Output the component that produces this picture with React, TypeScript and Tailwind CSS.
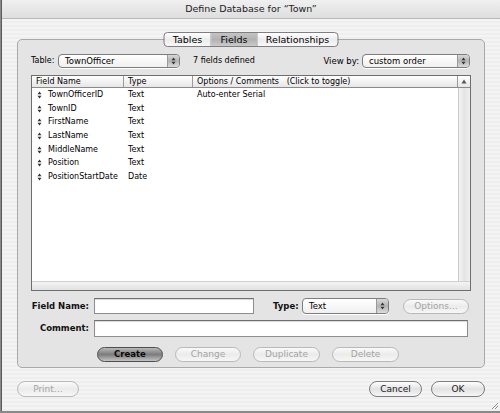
import React from "react";

const fieldRows = [
  { name: "TownOfficerID", type: "Text", options: "Auto-enter Serial" },
  { name: "TownID", type: "Text", options: "" },
  { name: "FirstName", type: "Text", options: "" },
  { name: "LastName", type: "Text", options: "" },
  { name: "MiddleName", type: "Text", options: "" },
  { name: "Position", type: "Text", options: "" },
  { name: "PositionStartDate", type: "Date", options: "" },
];

function UpDown() {
  return (
    <svg width="5" height="8" viewBox="0 0 5 8" className="shrink-0">
      <path d="M2.5 0.5 L4.5 3.2 L0.5 3.2 Z M2.5 7.5 L4.5 4.8 L0.5 4.8 Z" fill="#333" />
    </svg>
  );
}

function PopUp({ value, className }: { value: string; className: string }) {
  return (
    <div
      className={`flex items-stretch rounded-[4px] border border-[#7d7d7d] bg-gradient-to-b from-white to-[#f0f0f0] shadow-[0_1px_0_#fff] ${className}`}
    >
      <span className="flex-1 pl-[6px] flex items-center text-[8.5px] text-black leading-none">{value}</span>
      <span className="w-[12px] flex items-center justify-center border-l border-[#9a9a9a] rounded-r-[3px] bg-gradient-to-b from-[#d8d8d8] via-[#b4b4b4] to-[#dcdcdc]">
        <UpDown />
      </span>
    </div>
  );
}

type BtnKind = "default" | "normal" | "disabled";

function AquaButton({ label, kind, className }: { label: string; kind: BtnKind; className: string }) {
  const styles: Record<BtnKind, string> = {
    default:
      "border-[#4e4e4e] bg-gradient-to-b from-[#b8b8b8] via-[#7c7c7c] to-[#c4c4c4] text-black",
    normal:
      "border-[#7e7e7e] bg-gradient-to-b from-white via-[#e2e2e2] to-[#f6f6f6] text-[#1a1a1a]",
    disabled:
      "border-[#b9b9b9] bg-gradient-to-b from-[#fafafa] via-[#ebebeb] to-[#f7f7f7] text-[#a4a4a4]",
  };
  return (
    <div
      className={`flex items-center justify-center rounded-full border text-[9px] leading-none ${styles[kind]} ${className}`}
    >
      <span className={kind === "default" ? "text-[#0a0a0a] font-bold text-[8.5px]" : ""}>{label}</span>
    </div>
  );
}

function TextField({ className }: { className: string }) {
  return (
    <div className={`bg-white border border-[#8e8e8e] border-t-[#6f6f6f] shadow-[inset_0_1px_1px_rgba(0,0,0,0.15)] ${className}`} />
  );
}

export default function App() {
  return (
    <div className="w-[500px] h-[413px] overflow-hidden font-['DejaVu_Sans','Liberation_Sans',sans-serif] bg-[#8a8a8a]">
      <div className="w-[499px] h-[411px] ml-[1px] flex flex-col border-l border-[#5c5c5c] bg-[repeating-linear-gradient(0deg,#eeeeee_0px,#eeeeee_2px,#f4f4f4_2px,#f4f4f4_4px)]">
        {/* title bar */}
        <div className="h-[19px] shrink-0 flex items-center justify-center border-b border-[#b8b8b8] bg-gradient-to-b from-[#f0f0f0] to-[#dedede]">
          <span className="text-[9.5px] text-[#222] leading-none">Define Database for “Town”</span>
        </div>

        {/* group box */}
        <div className="relative mt-[20px] ml-[15px] w-[468px] h-[329px] rounded-[5px] border border-[#a9a9a9] bg-[#e4e4e4] px-[13px] pt-[14px] flex flex-col">
          {/* segmented tabs over the border */}
          <div className="absolute left-1/2 -translate-x-1/2 top-[-8px] h-[15px] flex rounded-[4px] border border-[#7f7f7f] overflow-hidden text-[9.5px] leading-none text-black bg-gradient-to-b from-white via-[#ececec] to-[#f8f8f8]">
            <div className="w-[47px] flex items-center justify-center border-r border-[#a0a0a0]">Tables</div>
            <div className="w-[46px] flex items-center justify-center border-r border-[#a0a0a0] bg-gradient-to-b from-[#c4c4c4] via-[#b2b2b2] to-[#cacaca]">Fields</div>
            <div className="w-[80px] flex items-center justify-center">Relationships</div>
          </div>

          {/* table / view by row */}
          <div className="h-[14px] flex items-center text-[8px] text-black leading-none">
            <span className="w-[27px]">Table:</span>
            <PopUp value="TownOfficer" className="w-[122px] h-[14px]" />
            <span className="ml-[13px]">7 fields defined</span>
            <span className="ml-auto mr-[3px] text-[8.5px]">View by:</span>
            <PopUp value="custom order" className="w-[108px] h-[14px] mr-[1px]" />
          </div>

          {/* field list */}
          <div className="mt-[7px] h-[216px] w-[440px] border border-[#6e6e6e] bg-white flex flex-col text-[8px] leading-none text-black">
            <div className="h-[12px] shrink-0 flex border-b border-[#8a8a8a] bg-gradient-to-b from-white to-[#e6e6e6]">
              <div className="w-[92px] flex items-center pl-[4px] border-r border-[#9a9a9a]">Field Name</div>
              <div className="w-[69px] flex items-center pl-[4px] border-r border-[#9a9a9a]">Type</div>
              <div className="flex-1 flex items-center pl-[4px] border-r border-[#9a9a9a]">
                Options / Comments&nbsp;&nbsp;&nbsp;(Click to toggle)
              </div>
              <div className="w-[12px] flex items-center justify-center">
                <svg width="6" height="5" viewBox="0 0 6 5">
                  <path d="M3 0.5 L5.5 4.5 L0.5 4.5 Z" fill="#555" />
                </svg>
              </div>
            </div>
            <div className="flex-1 flex min-h-0">
              <div className="flex-1 flex flex-col">
                {fieldRows.map((r) => (
                  <div key={r.name} className="h-[13.7px] flex items-center">
                    <div className="w-[92px] flex items-center gap-[6px] pl-[5px]">
                      <UpDown />
                      <span>{r.name}</span>
                    </div>
                    <div className="w-[69px] pl-[4px]">{r.type}</div>
                    <div className="flex-1 pl-[4px]">{r.options}</div>
                  </div>
                ))}
              </div>
              <div className="w-[12px] border-l border-[#c8c8c8] bg-gradient-to-r from-[#f4f4f4] via-[#e4e4e4] to-[#f0f0f0]" />
            </div>
            <div className="h-[9px] shrink-0 border-t border-[#d0d0d0] bg-gradient-to-b from-[#f4f4f4] to-[#e2e2e2]" />
          </div>

          {/* field name row */}
          <div className="mt-[7px] h-[16px] flex items-center">
            <span className="w-[63px] pr-[5px] text-right text-[8.5px] font-bold text-[#111] leading-none">Field Name:</span>
            <TextField className="w-[160px] h-[16px]" />
            <span className="ml-[19px] w-[29px] text-[8.5px] font-bold text-[#111] leading-none">Type:</span>
            <PopUp value="Text" className="w-[87px] h-[16px]" />
            <AquaButton label="Options…" kind="disabled" className="ml-[14px] w-[66px] h-[15px]" />
          </div>

          {/* comment row */}
          <div className="mt-[6px] h-[17px] flex items-center">
            <span className="w-[63px] pr-[5px] text-right text-[8.5px] font-bold text-[#111] leading-none">Comment:</span>
            <TextField className="w-[374px] h-[17px]" />
          </div>

          {/* action buttons */}
          <div className="mt-[10px] h-[15px] flex items-center gap-[12px] pl-[66px]">
            <AquaButton label="Create" kind="default" className="w-[66px] h-[15px]" />
            <AquaButton label="Change" kind="disabled" className="w-[66px] h-[15px]" />
            <AquaButton label="Duplicate" kind="disabled" className="w-[67px] h-[15px]" />
            <AquaButton label="Delete" kind="disabled" className="w-[67px] h-[15px]" />
          </div>
        </div>

        {/* bottom buttons */}
        <div className="mt-[13px] h-[16px] flex items-center px-[15px]">
          <AquaButton label="Print…" kind="disabled" className="w-[62px] h-[16px]" />
          <AquaButton label="Cancel" kind="normal" className="ml-auto w-[53px] h-[16px]" />
          <AquaButton label="OK" kind="normal" className="ml-[9px] w-[54px] h-[16px]" />
        </div>

        {/* resize grip */}
        <div className="mt-auto flex justify-end pr-[1px] pb-[1px]">
          <svg width="9" height="9" viewBox="0 0 9 9">
            <path d="M8 2 L2 8 M8 5 L5 8" stroke="#8c8c8c" strokeWidth="1" />
          </svg>
        </div>
      </div>
    </div>
  );
}
